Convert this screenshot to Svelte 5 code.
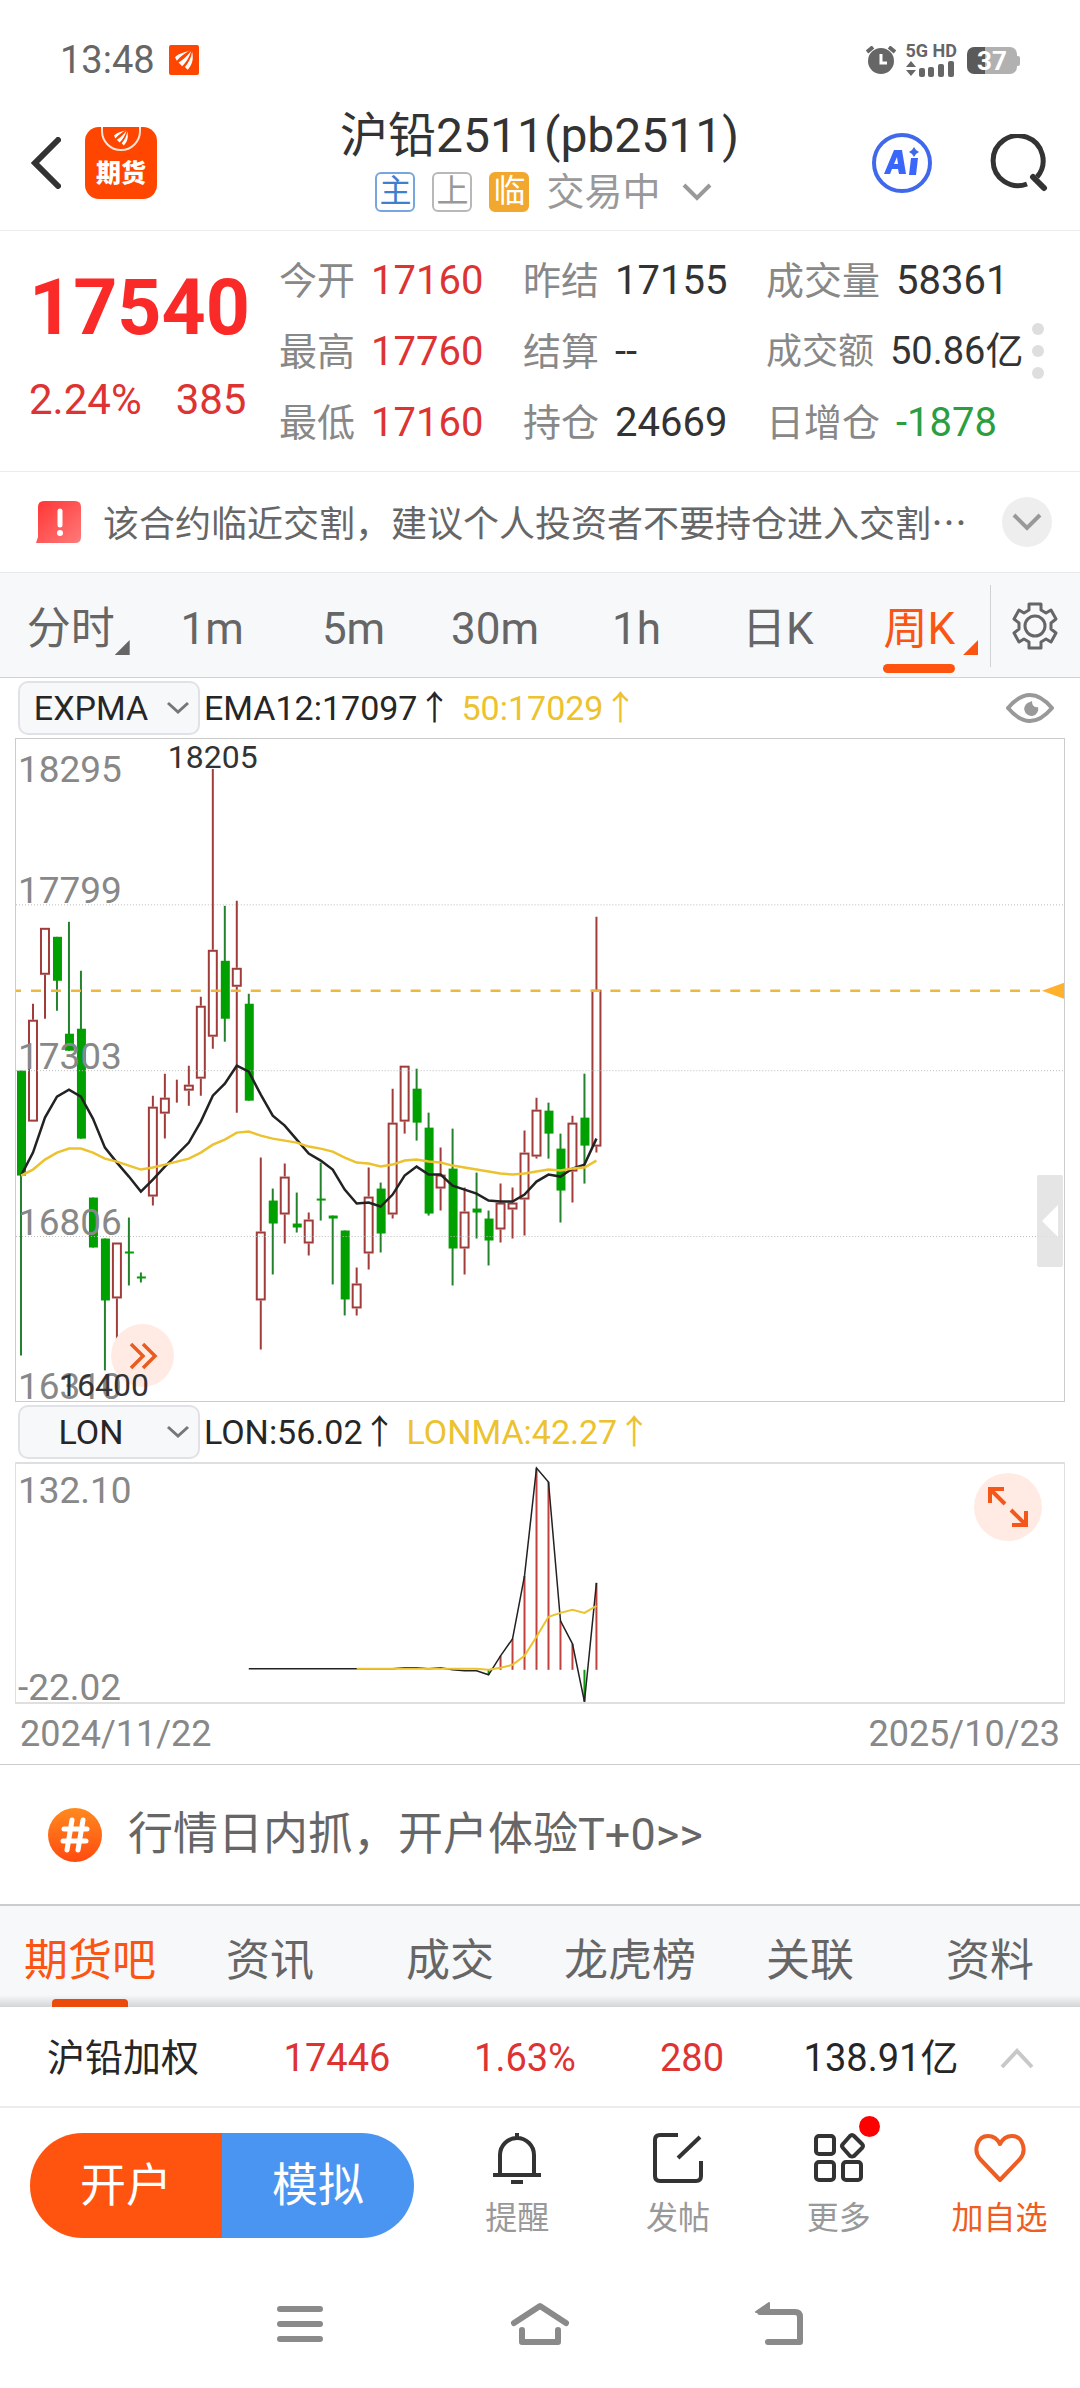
<script lang="ts">
	type Candle = [up: 0 | 1, high: number, top: number, bottom: number, low: number];

	// one entry per week, in plot units measured from the top edge
	const candles: Candle[] = [
		[0, 332, 332, 437, 617],
		[1, 265, 281, 383, 383],
		[1, 189, 189, 236, 280],
		[0, 198, 198, 242, 272],
		[0, 183, 295, 312, 312],
		[0, 232, 290, 400, 400],
		[0, 459, 459, 509, 509],
		[0, 500, 500, 562, 632],
		[1, 504, 504, 560, 606],
		[0, 479, 513, 515, 547],
		[0, 534, 538, 540, 544],
		[1, 357, 368, 458, 467],
		[1, 335, 359, 375, 400],
		[1, 340, 340, 341, 364],
		[1, 327, 346, 352, 367],
		[1, 258, 267, 340, 357],
		[1, 30, 211, 298, 310],
		[0, 167, 222, 280, 303],
		[1, 162, 229, 248, 374],
		[0, 255, 265, 362, 362],
		[1, 419, 493, 562, 611],
		[0, 450, 462, 485, 536],
		[1, 425, 438, 476, 505],
		[0, 454, 485, 489, 494],
		[1, 474, 481, 505, 517],
		[0, 424, 460, 462, 482],
		[0, 477, 477, 480, 546],
		[0, 492, 492, 561, 577],
		[1, 529, 545, 570, 577],
		[1, 429, 458, 515, 531],
		[0, 444, 450, 495, 514],
		[1, 350, 384, 476, 480],
		[1, 327, 327, 383, 395],
		[0, 330, 350, 384, 402],
		[0, 374, 389, 475, 477],
		[1, 409, 436, 450, 472],
		[0, 390, 430, 510, 547],
		[1, 449, 473, 510, 536],
		[0, 434, 470, 474, 500],
		[0, 472, 480, 502, 527],
		[1, 445, 464, 491, 504],
		[1, 449, 464, 471, 500],
		[1, 392, 414, 461, 497],
		[1, 359, 371, 418, 420],
		[0, 364, 372, 395, 420],
		[0, 395, 410, 452, 484],
		[1, 377, 384, 433, 464],
		[0, 335, 379, 407, 445],
		[1, 178, 251, 408, 414]
	];

	const ema12 = [
		437, 414, 379, 358, 351, 358, 380, 409, 424, 438, 453, 441, 428, 416, 404, 383, 357, 345, 327,
		333, 356, 377, 387, 401, 415, 422, 431, 451, 465, 464, 468, 456, 437, 428, 436, 436, 447, 451,
		455, 462, 463, 463, 456, 443, 436, 438, 430, 426, 400
	];
	const ema50 = [
		437, 431, 421, 414, 410, 410, 414, 420, 423, 427, 431, 429, 426, 423, 420, 414, 406, 401, 394,
		393, 397, 400, 402, 404, 408, 410, 413, 419, 424, 425, 428, 426, 422, 421, 423, 424, 427, 429,
		431, 433, 435, 436, 435, 433, 431, 432, 430, 429, 422
	];

	const lonStart = 19;
	const lon = [
		205, 205, 205, 205, 205, 205, 205, 205, 205, 205, 205, 205, 205, 204, 204, 205, 204, 206, 207,
		207, 211, 192, 175, 112, 4, 18, 157, 180, 238, 119
	];
	const lonMaStart = 28;
	const lonMa = [
		205, 205, 205, 205, 205, 205, 205, 205, 205, 205, 205, 206, 204, 201, 192, 173, 153, 149, 146,
		149, 142
	];
	const lonZero = 206;

	const stats = [
		['今开', '17160', 'up'],
		['昨结', '17155', ''],
		['成交量', '58361', ''],
		['最高', '17760', 'up'],
		['结算', '--', ''],
		['成交额', '50.86亿', 'small'],
		['最低', '17160', 'up'],
		['持仓', '24669', ''],
		['日增仓', '-1878', 'down']
	];

	const periods = ['分时', '1m', '5m', '30m', '1h', '日K', '周K'];
	const sections = ['期货吧', '资讯', '成交', '龙虎榜', '关联', '资料'];

	const priceLabels = [
		{ text: '18295', y: 43 },
		{ text: '17799', y: 164 },
		{ text: '17303', y: 330 },
		{ text: '16806', y: 496 },
		{ text: '16310', y: 661 }
	];

	let period = $state('周K');
	let section = $state('期货吧');
	let mainIndicator = $state('EXPMA');
	let subIndicator = $state('LON');

	const x = (i: number) => 5 + i * 12;
	const line = (values: number[], start = 0) =>
		values.map((v, i) => `${x(i + start)},${v}`).join(' ');
</script>

{#snippet feather()}
	<path d="M0 8C5 3 11 3 17 0C12 3 6 7 2 12Z" />
	<path d="M4 14C9 11 14 6 18 1C16 8 12 14 8 18Z" />
	<path d="M11 19C15 14 18 9 19 2C21 10 19 17 14 22Z" />
{/snippet}

<div class="page">
	<div class="status">
		<span class="time">13:48</span>
		<svg class="app-badge" viewBox="0 0 30 30" width="30" height="30">
			<rect width="30" height="30" rx="2" fill="#ff4600" />
			<g fill="#fff" transform="translate(6 5) scale(.9)">{@render feather()}</g>
		</svg>
		<div class="status-right">
			<svg viewBox="0 0 30 28" width="30" height="28" fill="none">
				<circle cx="15" cy="15" r="13" fill="#666" />
				<path d="M1 6L7 1M29 6L23 1" stroke="#666" stroke-width="4" />
				<path d="M15 8V17H21" stroke="#fff" stroke-width="3" />
			</svg>
			<div class="network">
				<span>5G HD</span>
				<svg viewBox="0 0 48 18" width="48" height="18" fill="#666">
					<path d="M0 8L5 2L10 8ZM0 11L5 17L10 11Z" />
					<rect x="13" y="9" width="6" height="9" rx="2" />
					<rect x="22" y="8" width="6" height="10" rx="2" />
					<rect x="32" y="5" width="6" height="13" rx="2" />
					<rect x="42" y="2" width="6" height="16" rx="2" />
				</svg>
			</div>
			<div class="battery">37</div>
		</div>
	</div>

	<header>
		<div class="header-left">
			<button aria-label="返回">
				<svg viewBox="0 0 30 52" width="30" height="52" fill="none">
					<path d="M27 3L4 26L27 49" stroke="#333" stroke-width="6" stroke-linecap="round" />
				</svg>
			</button>
			<a class="logo" href="#home">
				<svg viewBox="0 0 40 24" width="40" height="24">
					<path d="M1 0V4A19 19 0 0 0 39 4V0" fill="none" stroke="#ffe3d6" stroke-width="2" />
					<g fill="#fff" transform="translate(13 3) scale(.7)">{@render feather()}</g>
				</svg>
				<span>期货</span>
			</a>
		</div>
		<div class="title">
			<h1>沪铅2511(pb2511)</h1>
			<div class="subtitle">
				<span class="tag main">主</span>
				<span class="tag">上</span>
				<span class="tag near">临</span>
				<span>交易中</span>
				<svg viewBox="0 0 30 18" width="30" height="18" fill="none">
					<path d="M2 2L15 15L28 2" stroke="#999" stroke-width="4" />
				</svg>
			</div>
		</div>
		<div class="header-right">
			<button aria-label="AI">
				<svg viewBox="0 0 60 60" width="60" height="60">
					<circle cx="30" cy="30" r="28" fill="none" stroke="#3f69ea" stroke-width="4" />
					<path
						d="M12 41L22 17H30L34 41H27L26 36H20L18 41ZM22 31H26L25 24Z"
						fill="#3a66fa"
						fill-rule="evenodd"
					/>
					<path d="M39 25H46L44 42H37Z" fill="#3a66fa" />
					<path d="M42 14L44 17L47 19L44 21L42 24L40 21L37 19L40 17Z" fill="#3f69ea" />
				</svg>
			</button>
			<button aria-label="搜索">
				<svg viewBox="0 0 58 58" width="58" height="58" fill="none" stroke="#333" stroke-width="5">
					<path d="M37 50A25 25 0 1 1 47 43" />
					<path d="M43 43L54 54" stroke-width="6" stroke-linecap="round" />
				</svg>
			</button>
		</div>
	</header>

	<section class="quote">
		<div class="last">
			<strong>17540</strong>
			<div class="change"><span>2.24%</span><span>385</span></div>
		</div>
		<dl>
			{#each stats as [label, value, tone]}
				<div class="stat {tone}">
					<dt>{label}</dt>
					<dd>{value}</dd>
				</div>
			{/each}
		</dl>
		<button class="dots" aria-label="更多行情"><i></i><i></i><i></i></button>
	</section>

	<section class="notice">
		<svg viewBox="0 0 45 42" width="45" height="42">
			<defs>
				<linearGradient id="alert" x1="0" y1="0" x2="1" y2="1">
					<stop offset="0" stop-color="#ff3434" />
					<stop offset="1" stop-color="#ff7a7a" />
				</linearGradient>
			</defs>
			<path d="M8 0H39Q45 0 45 6V36Q45 42 39 42H0L2 36V6Q2 0 8 0Z" fill="url(#alert)" />
			<path d="M24 10V24" stroke="#fff" stroke-width="5" stroke-linecap="round" />
			<circle cx="24" cy="32" r="3" fill="#fff" />
		</svg>
		<p>该合约临近交割，建议个人投资者不要持仓进入交割…</p>
		<button class="round" aria-label="展开公告">
			<svg viewBox="0 0 30 18" width="30" height="18" fill="none">
				<path d="M2 2L15 15L28 2" stroke="#999" stroke-width="4" />
			</svg>
		</button>
	</section>

	<nav class="periods">
		{#each periods as p}
			<button class:active={period === p} onclick={() => (period = p)}>
				<span
					>{p}{#if p === '分时' || p === '周K'}<i class="corner"></i>{/if}</span
				>
			</button>
		{/each}
		<button class="settings" aria-label="设置">
			<svg viewBox="0 0 46 48" width="46" height="48" fill="none" stroke="#666" stroke-width="3">
				<path
					d="M17 2H29V8L34 11L39 8L44 17L39 21V27L44 31L39 40L34 37L29 40V46H17V40L12 37L7 40L2 31L7 27V21L2 17L7 8L12 11L17 8Z"
					stroke-linejoin="round"
				/>
				<circle cx="23" cy="24" r="10" />
			</svg>
		</button>
	</nav>

	<section class="charts">
		<div class="indicator">
			<label>
				<select bind:value={mainIndicator} aria-label="主图指标">
					<option>EXPMA</option>
					<option>MA</option>
					<option>BOLL</option>
				</select>
				<svg viewBox="0 0 24 14" width="24" height="14" fill="none">
					<path d="M2 2L12 11L22 2" stroke="#777" stroke-width="3" />
				</svg>
			</label>
			<span>EMA12:17097↑</span>
			<span class="yellow">50:17029↑</span>
			<button class="eye" aria-label="显示指标">
				<svg viewBox="0 0 48 30" width="48" height="30">
					<path
						d="M2 15Q24 -11 46 15Q24 41 2 15Z"
						fill="none"
						stroke="#999"
						stroke-width="4"
						stroke-linejoin="round"
					/>
					<path d="M24 9A7 7 0 1 0 32 14Q26 15 26 8Z" fill="#999" />
				</svg>
			</button>
		</div>

		<div class="plot">
			<svg viewBox="0 0 1049 663">
				{#each candles as [up, high, top, bottom, low], i}
					{#if up}
						<g class="rise">
							<path d="M{x(i)} {high}V{top}M{x(i)} {bottom}V{low}" />
							<rect x={x(i) - 4} y={top + 1} width="8" height={Math.max(bottom - top - 2, 0)} />
						</g>
					{:else}
						<g class="fall">
							<path d="M{x(i)} {high}V{low}" />
							<rect x={x(i) - 4} y={top} width="9" height={bottom - top} />
						</g>
					{/if}
				{/each}
				{#each [166, 332, 498] as y}
					<line class="grid" x1="0" x2="1049" y1={y} y2={y} />
				{/each}
				<polyline points={line(ema12)} stroke="#222" stroke-width="2.5" />
				<polyline points={line(ema50)} stroke="#ecc22f" stroke-width="2.5" />
				<line class="last-price" x1="0" x2="1028" y1="252" y2="252" />
				<path d="M1027 252L1049 244V260Z" fill="#ffb12b" />
				{#each priceLabels as label}
					<text x="2" y={label.y}>{label.text}</text>
				{/each}
				<text class="mark" x="152" y="29">18205</text>
			</svg>
			<button class="fab forward" aria-label="下一段">
				<svg viewBox="0 0 30 30" width="30" height="30" fill="none">
					<path d="M3 3L15 15L3 27M15 3L27 15L15 27" stroke="#e85c20" stroke-width="3.5" />
				</svg>
			</button>
			<span class="low-mark">16400</span>
			<button class="drawer" aria-label="展开侧栏">
				<svg viewBox="0 0 16 32" width="16" height="32"><path d="M0 16L16 0V32Z" fill="#fff" /></svg>
			</button>
		</div>

		<div class="indicator">
			<label>
				<select bind:value={subIndicator} aria-label="副图指标">
					<option>LON</option>
					<option>MACD</option>
					<option>KDJ</option>
				</select>
				<svg viewBox="0 0 24 14" width="24" height="14" fill="none">
					<path d="M2 2L12 11L22 2" stroke="#777" stroke-width="3" />
				</svg>
			</label>
			<span>LON:56.02↑</span>
			<span class="yellow">LONMA:42.27↑</span>
		</div>

		<div class="plot sub">
			<svg viewBox="0 0 1049 238">
				{#each lon as v, i}
					{#if Math.abs(v - lonZero) > 3}
						<line
							x1={x(i + lonStart)}
							x2={x(i + lonStart)}
							y1={lonZero}
							y2={v}
							stroke={v < lonZero ? '#c0413e' : '#0a9a0a'}
							stroke-width="2"
						/>
					{/if}
				{/each}
				<polyline points={line(lon, lonStart)} stroke="#222" stroke-width="1.5" />
				<polyline points={line(lonMa, lonMaStart)} stroke="#ecc22f" stroke-width="2" />
				<text x="2" y="39">132.10</text>
				<text x="2" y="236">-22.02</text>
			</svg>
			<button class="fab expand" aria-label="全屏">
				<svg viewBox="0 0 44 44" width="44" height="44" fill="none" stroke="#f5571b" stroke-width="4">
					<path d="M4 18V4H18M4 4L19 19M40 26V40H26M40 40L25 25" />
				</svg>
			</button>
		</div>

		<div class="dates"><time>2024/11/22</time><time>2025/10/23</time></div>
	</section>

	<a class="promo" href="#open">
		<svg viewBox="0 0 54 54" width="54" height="54">
			<defs>
				<linearGradient id="topic" x1="0" y1="0" x2="0" y2="1">
					<stop offset="0" stop-color="#ff8a1f" />
					<stop offset="1" stop-color="#ff4a10" />
				</linearGradient>
			</defs>
			<circle cx="27" cy="27" r="27" fill="url(#topic)" />
			<path
				d="M24 12L19 42M35 12L30 42M16 21H39M15 33H38"
				stroke="#fff"
				stroke-width="5"
				stroke-linecap="round"
			/>
		</svg>
		<span>行情日内抓，开户体验T+0&gt;&gt;</span>
	</a>

	<nav class="sections">
		{#each sections as s}
			<button class:active={section === s} onclick={() => (section = s)}>{s}</button>
		{/each}
	</nav>

	<div class="ticker">
		<span>沪铅加权</span>
		<span class="up">17446</span>
		<span class="up">1.63%</span>
		<span class="up">280</span>
		<span>138.91亿</span>
		<button aria-label="展开指数">
			<svg viewBox="0 0 34 21" width="34" height="21" fill="none">
				<path d="M2 19L17 3L32 19" stroke="#c8c8c8" stroke-width="4" />
			</svg>
		</button>
	</div>

	<footer>
		<div class="pill">
			<button class="open">开户</button>
			<button class="demo">模拟</button>
		</div>
		<div class="actions">
			<button>
				<svg viewBox="0 0 52 52" width="52" height="52" fill="none" stroke="#333" stroke-width="4">
					<path d="M9 43V23A17 17 0 0 1 43 23V43M2 43H50M26 6V1M20 50H32" />
				</svg>
				提醒
			</button>
			<button>
				<svg viewBox="0 0 52 52" width="52" height="52" fill="none" stroke="#333" stroke-width="4">
					<path d="M26 3H8Q3 3 3 8V44Q3 49 8 49H44Q49 49 49 44V29" />
					<path d="M26 26L48 5" />
				</svg>
				发帖
			</button>
			<button>
				<svg viewBox="0 0 52 52" width="52" height="52" fill="none" stroke="#333" stroke-width="4">
					<rect x="3" y="4" width="18" height="18" rx="3" />
					<rect x="3" y="30" width="18" height="18" rx="3" />
					<rect x="30" y="30" width="18" height="18" rx="3" />
					<path d="M37 4Q39 2 41 4L49 12Q51 14 49 16L41 24Q39 25 37 24L30 16Q28 14 30 12Z" />
				</svg>
				更多
				<i class="dot"></i>
			</button>
			<button class="favorite">
				<svg viewBox="0 0 52 52" width="52" height="52" fill="none" stroke="#ee5d22" stroke-width="4">
					<path
						d="M26 48L6 27C-1 19 3 4 14 4C20 4 24 8 26 12C28 8 32 4 38 4C49 4 53 19 46 27Z"
						stroke-linejoin="round"
					/>
				</svg>
				加自选
			</button>
		</div>
	</footer>

	<div class="system">
		<button aria-label="最近任务">
			<svg viewBox="0 0 46 38" width="46" height="38" stroke="#8a8a8a" stroke-width="6">
				<path d="M3 4H43M3 19H43M3 34H43" stroke-linecap="round" />
			</svg>
		</button>
		<button aria-label="主屏幕">
			<svg
				viewBox="0 0 60 44"
				width="60"
				height="44"
				fill="none"
				stroke="#8a8a8a"
				stroke-width="6"
				stroke-linecap="round"
				stroke-linejoin="round"
			>
				<path d="M4 21L30 4L56 21M12 28V40H48V28" />
			</svg>
		</button>
		<button aria-label="返回上一页">
			<svg viewBox="0 0 50 44" width="50" height="44" fill="none" stroke="#8a8a8a" stroke-width="6">
				<path d="M5 10H40Q45 10 45 15V40H13" stroke-linecap="round" stroke-linejoin="round" />
				<path d="M1 10L14 1V10Z" fill="#8a8a8a" stroke-width="2" stroke-linejoin="round" />
			</svg>
		</button>
	</div>
</div>

<style>
	:global(body) {
		background: #fff;
	}

	.page {
		font-family: Roboto, 'Noto Sans CJK SC', sans-serif;
		color: #333;
		font-size: 38px;
		line-height: 1.2;
	}

	svg {
		display: block;
		flex: none;
	}

	button {
		font: inherit;
		color: inherit;
		background: none;
		border: 0;
		padding: 0;
		cursor: pointer;
	}

	a {
		color: inherit;
		text-decoration: none;
	}

	.status {
		display: flex;
		align-items: center;
		height: 40px;
		padding: 40px 60px 0;
		color: #666;
	}

	.time {
		line-height: 40px;
	}

	.app-badge {
		margin-left: 14px;
	}

	.status-right {
		display: flex;
		align-items: center;
		gap: 10px;
		margin-left: auto;
	}

	.network {
		display: flex;
		flex-direction: column;
		font-size: 18px;
		font-weight: 700;
		line-height: 16px;
	}

	.battery {
		position: relative;
		width: 50px;
		height: 27px;
		margin-right: 3px;
		border-radius: 7px;
		background: linear-gradient(90deg, #5a5a5a 37%, #b1b1b1 37%);
		color: #fff;
		font-size: 26px;
		font-weight: 700;
		line-height: 28px;
		text-align: center;
	}

	.battery::after {
		content: '';
		position: absolute;
		top: 9px;
		right: -3px;
		width: 3px;
		height: 10px;
		border-radius: 0 2px 2px 0;
		background: #b1b1b1;
	}

	header {
		display: grid;
		grid-template-columns: 1fr auto 1fr;
		align-items: center;
		height: 150px;
		padding: 0 32px 0 31px;
		border-bottom: 1px solid #ececec;
	}

	.header-left {
		display: flex;
		align-items: center;
		gap: 24px;
		padding-top: 16px;
	}

	.logo {
		display: flex;
		flex-direction: column;
		align-items: center;
		width: 72px;
		height: 72px;
		border-radius: 14px;
		background: #ff4600;
		color: #fff;
	}

	.logo span {
		font-size: 25px;
		font-weight: 900;
		line-height: 46px;
	}

	.header-right {
		display: flex;
		align-items: center;
		justify-content: flex-end;
		gap: 58px;
		padding-top: 16px;
	}

	.title {
		padding-top: 14px;
	}

	h1 {
		margin: 0;
		font-size: 48px;
		font-weight: 400;
		line-height: 60px;
	}

	.subtitle {
		display: flex;
		align-items: center;
		justify-content: center;
		gap: 17px;
		padding-left: 8px;
		color: #999;
		line-height: 52px;
	}

	.subtitle svg {
		margin-left: 4px;
	}

	.tag {
		box-sizing: border-box;
		width: 40px;
		height: 40px;
		border: 2px solid #b8b8b8;
		border-radius: 6px;
		font-size: 32px;
		line-height: 35px;
		text-align: center;
	}

	.tag.main {
		border-color: #76a6dd;
		color: #3f7fcf;
	}

	.tag.near {
		border-color: #f2a72e;
		background: #f2a72e;
		color: #fff;
	}

	.quote {
		display: flex;
		align-items: center;
		height: 240px;
		border-bottom: 1px solid #ececec;
	}

	.last {
		width: 250px;
		padding: 0 0 18px 29px;
		color: #f92a28;
	}

	.last strong {
		display: block;
		font-size: 77px;
		font-weight: 700;
		line-height: 92px;
	}

	.change {
		display: flex;
		gap: 34px;
		margin-top: 24px;
		color: #dd3333;
		font-size: 42px;
		line-height: 44px;
	}

	dl {
		display: grid;
		flex: 1;
		grid-template-columns: 243fr 242fr 265fr;
		grid-auto-rows: 71px;
		margin: 0;
	}

	.stat {
		display: flex;
		align-items: baseline;
		gap: 16px;
		line-height: 71px;
		white-space: nowrap;
	}

	dt {
		color: #888;
	}

	dd {
		margin: 0;
		font-size: 40px;
	}

	.stat.small dt {
		font-size: 36px;
	}

	.stat.small dd {
		font-size: 38px;
	}

	.up,
	.stat.up dd {
		color: #dd3333;
	}

	.stat.down dd {
		color: #2b9e42;
	}

	.dots {
		display: flex;
		flex-direction: column;
		gap: 10px;
		padding-right: 36px;
	}

	.dots i {
		width: 12px;
		height: 12px;
		border-radius: 50%;
		background: #dedede;
	}

	.notice {
		display: flex;
		align-items: center;
		height: 100px;
		padding: 0 28px 0 36px;
		border-bottom: 1px solid #e8e9eb;
	}

	.notice p {
		flex: 1;
		margin: 0 0 0 22px;
		color: #666;
		font-family: 'Noto Sans CJK SC', sans-serif;
		font-size: 36px;
		white-space: nowrap;
	}

	.round {
		display: grid;
		place-items: center;
		width: 50px;
		height: 50px;
		border-radius: 50%;
		background: #eee;
	}

	.periods {
		display: flex;
		height: 104px;
		border-bottom: 1px solid #d0d2d6;
		background: #f7f8fa;
		color: #666;
		font-size: 44px;
	}

	.periods button {
		flex: 1;
	}

	.periods span {
		position: relative;
		display: inline-block;
		height: 104px;
		line-height: 112px;
	}

	.active {
		color: #fb5513;
	}

	.periods .active span::after {
		content: '';
		position: absolute;
		left: 0;
		right: 0;
		bottom: 4px;
		height: 9px;
		border-radius: 5px;
		background: #ff5310;
	}

	.corner {
		position: absolute;
		left: 100%;
		bottom: 22px;
		width: 15px;
		height: 15px;
		background: currentColor;
		clip-path: polygon(100% 0, 100% 100%, 0 100%);
	}

	.active .corner {
		margin-left: 8px;
	}

	.periods .settings {
		flex: none;
		display: grid;
		place-items: center;
		width: 90px;
		height: 82px;
		margin-top: 12px;
		border-left: 1px solid #d0d2d6;
	}

	.charts {
		border-bottom: 1px solid #ccc;
	}

	.indicator {
		display: flex;
		align-items: center;
		height: 60px;
		padding: 0 26px 0 18px;
		color: #262626;
		font-size: 34px;
	}

	.indicator label {
		position: relative;
		margin-right: 4px;
	}

	.indicator label svg {
		position: absolute;
		top: 20px;
		right: 10px;
		pointer-events: none;
	}

	.indicator span {
		margin-right: 10px;
	}

	select {
		box-sizing: border-box;
		display: block;
		width: 182px;
		height: 54px;
		padding: 0 36px 0 0;
		appearance: none;
		border: 2px solid #e0e2e7;
		border-radius: 10px;
		background: #f7f8fa;
		color: inherit;
		font: inherit;
		text-align: center;
		text-align-last: center;
	}

	.indicator .yellow {
		color: #ecc22f;
	}

	.eye {
		margin-left: auto;
	}

	.plot {
		position: relative;
		margin: 0 15px;
		border: 1px solid #ccc;
	}

	.plot.sub {
		border-color: #dfdfdf;
		border-width: 2px 1px;
	}

	.plot > svg {
		width: 100%;
		height: auto;
		overflow: visible;
		fill: none;
	}

	.plot text {
		fill: #888;
		font-size: 37px;
	}

	.plot .mark {
		fill: #333;
		font-size: 32px;
	}

	.rise {
		stroke: #a03d3b;
		stroke-width: 2;
	}

	.rise rect {
		fill: #fff;
	}

	.fall {
		stroke: #24812c;
		stroke-width: 2;
	}

	.fall rect {
		fill: #00a000;
		stroke: none;
	}

	.grid {
		stroke: #bbb;
		stroke-dasharray: 1 2;
	}

	.last-price {
		stroke: #ecb83f;
		stroke-width: 2.5;
		stroke-dasharray: 10 10;
		stroke-dashoffset: 5;
	}

	.fab {
		position: absolute;
		display: grid;
		place-items: center;
		width: 63px;
		height: 63px;
		border-radius: 50%;
		background: #ffebe4;
	}

	.forward {
		left: 95px;
		bottom: 14px;
	}

	.expand {
		top: 9px;
		right: 22px;
		width: 68px;
		height: 68px;
	}

	.low-mark {
		position: absolute;
		left: 43px;
		bottom: 0;
		font-size: 32px;
		line-height: 32px;
	}

	.drawer {
		position: absolute;
		right: 1px;
		bottom: 134px;
		display: grid;
		place-items: center;
		width: 26px;
		height: 92px;
		border-radius: 2px;
		background: rgba(224, 224, 224, 0.85);
	}

	.dates {
		display: flex;
		justify-content: space-between;
		padding: 0 20px;
		color: #888;
		font-size: 36px;
		line-height: 60px;
	}

	.promo {
		display: flex;
		align-items: center;
		gap: 26px;
		height: 139px;
		padding-left: 48px;
		color: #666;
		font-size: 45px;
	}

	.sections {
		display: flex;
		height: 101px;
		border-top: 2px solid #ccc;
		background: linear-gradient(#f7f8fa 88%, #d4d5d6);
		color: #666;
		font-size: 44px;
	}

	.sections button {
		position: relative;
		flex: 1;
		padding-top: 10px;
	}

	.sections .active::after {
		content: '';
		position: absolute;
		bottom: 0;
		left: 50%;
		width: 76px;
		height: 8px;
		margin-left: -38px;
		border-radius: 4px 4px 0 0;
		background: #ea4a0c;
	}

	.ticker {
		display: grid;
		grid-template-columns: 246fr 182fr 194fr 140fr 238fr 34px;
		align-items: center;
		justify-items: center;
		height: 95px;
		padding: 4px 46px 0 0;
		border-bottom: 2px solid #ececec;
		color: #262626;
		white-space: nowrap;
	}

	.ticker .up {
		color: #dd3333;
	}

	footer {
		display: flex;
		align-items: center;
		height: 154px;
		padding-left: 30px;
	}

	.pill {
		display: flex;
		width: 384px;
		height: 105px;
		border-radius: 53px;
		overflow: hidden;
		color: #fff;
		font-size: 46px;
	}

	.pill button {
		flex: 1;
	}

	.open {
		background: #ff5310;
	}

	.demo {
		background: #4b95f2;
	}

	.actions {
		display: flex;
		flex: 1;
		margin-left: 23px;
		color: #999;
		font-size: 32px;
		line-height: 40px;
	}

	.actions button {
		position: relative;
		display: flex;
		flex: 1;
		flex-direction: column;
		align-items: center;
		gap: 14px;
	}

	.actions .favorite {
		color: #ee5d22;
	}

	.dot {
		position: absolute;
		top: -16px;
		left: 50%;
		width: 21px;
		height: 21px;
		margin-left: 20px;
		border-radius: 50%;
		background: #f00;
	}

	.system {
		display: flex;
		height: 124px;
		padding: 0 180px;
	}

	.system button {
		display: grid;
		flex: 1;
		place-items: center;
	}
</style>
